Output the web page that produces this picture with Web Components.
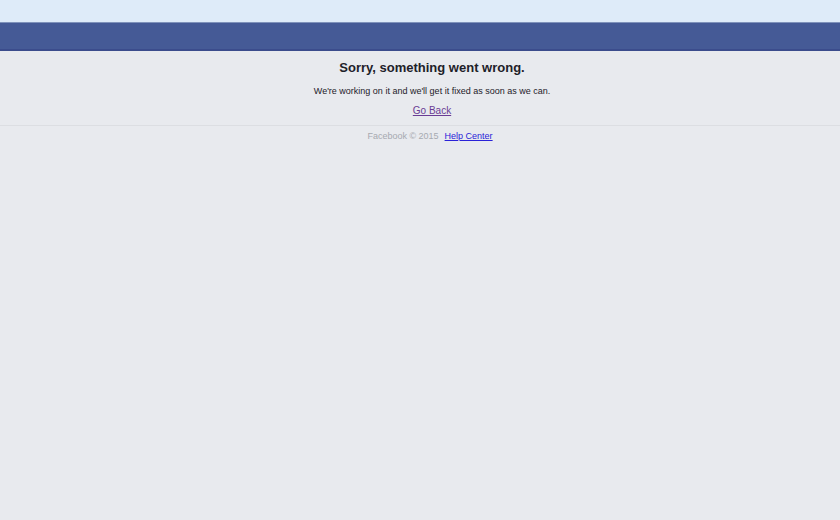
<!DOCTYPE html>
<html lang="en">
<head>
<meta charset="utf-8">
<meta name="viewport" content="width=device-width, initial-scale=1">
<title>Error</title>
<style>
  body {
    margin: 0;
    min-height: 100vh;
    background: #e8eaee;
    color: #1d2129;
    font-family: Arial, "Liberation Sans", sans-serif;
    font-size: 9px;
  }
</style>
</head>
<body>
<error-page>
  <error-message heading="Sorry, something went wrong.">
    We're working on it and we'll get it fixed as soon as we can.
    <text-link slot="action" href="#back" visited>Go Back</text-link>
  </error-message>
  <page-footer slot="footer">
    Facebook © 2015
    <text-link slot="links" href="#help">Help Center</text-link>
  </page-footer>
</error-page>

<script>
class TopBar extends HTMLElement {
  constructor() {
    super();
    this.attachShadow({ mode: "open" });
  }

  connectedCallback() {
    this.shadowRoot.innerHTML = `
      <style>
        :host {
          display: block;
        }

        .strip {
          height: 22px;
          background: #deebf9;
        }

        .bar {
          height: 26px;
          background: #455a96;
          border-top: 1px solid #7f92bb;
          border-bottom: 2px solid #3b4c8c;
        }
      </style>
      <div class="strip"></div>
      <div class="bar"></div>
    `;
  }
}

class TextLink extends HTMLElement {
  constructor() {
    super();
    this.attachShadow({ mode: "open" });
  }

  connectedCallback() {
    this.shadowRoot.innerHTML = `
      <style>
        :host {
          display: inline;
          color: #2a22d8;
        }

        :host([visited]) {
          color: #6a3c94;
        }

        a {
          color: inherit;
        }
      </style>
      <a href="${this.getAttribute("href")}"><slot></slot></a>
    `;
  }
}

class ErrorMessage extends HTMLElement {
  constructor() {
    super();
    this.attachShadow({ mode: "open" });
  }

  connectedCallback() {
    this.shadowRoot.innerHTML = `
      <style>
        :host {
          display: flex;
          flex-direction: column;
          align-items: center;
          gap: 8px;
          padding: 8px 0;
          text-align: center;
        }

        h1, p {
          margin: 0;
        }

        h1 {
          font-size: 13px;
          line-height: 18px;
        }

        p {
          line-height: 12px;
        }

        .action {
          font-size: 10px;
        }
      </style>
      <h1>${this.getAttribute("heading")}</h1>
      <p><slot></slot></p>
      <p class="action"><slot name="action"></slot></p>
    `;
  }
}

class PageFooter extends HTMLElement {
  constructor() {
    super();
    this.attachShadow({ mode: "open" });
  }

  connectedCallback() {
    this.shadowRoot.innerHTML = `
      <style>
        :host {
          display: flex;
          justify-content: center;
          gap: 6px;
          padding: 4px 0 4px 20px;
          border-top: 1px solid #dcdee2;
          color: #a6a9b0;
          line-height: 12px;
        }
      </style>
      <span><slot></slot></span>
      <slot name="links"></slot>
    `;
  }
}

class ErrorPage extends HTMLElement {
  constructor() {
    super();
    this.attachShadow({ mode: "open" });
  }

  connectedCallback() {
    this.shadowRoot.innerHTML = `
      <style>
        :host {
          display: block;
        }

        main {
          padding-left: 24px;
        }
      </style>
      <top-bar></top-bar>
      <main><slot></slot></main>
      <footer><slot name="footer"></slot></footer>
    `;
  }
}

// Define the custom elements
customElements.define("top-bar", TopBar);
customElements.define("text-link", TextLink);
customElements.define("error-message", ErrorMessage);
customElements.define("page-footer", PageFooter);
customElements.define("error-page", ErrorPage);
</script>
</body>
</html>
